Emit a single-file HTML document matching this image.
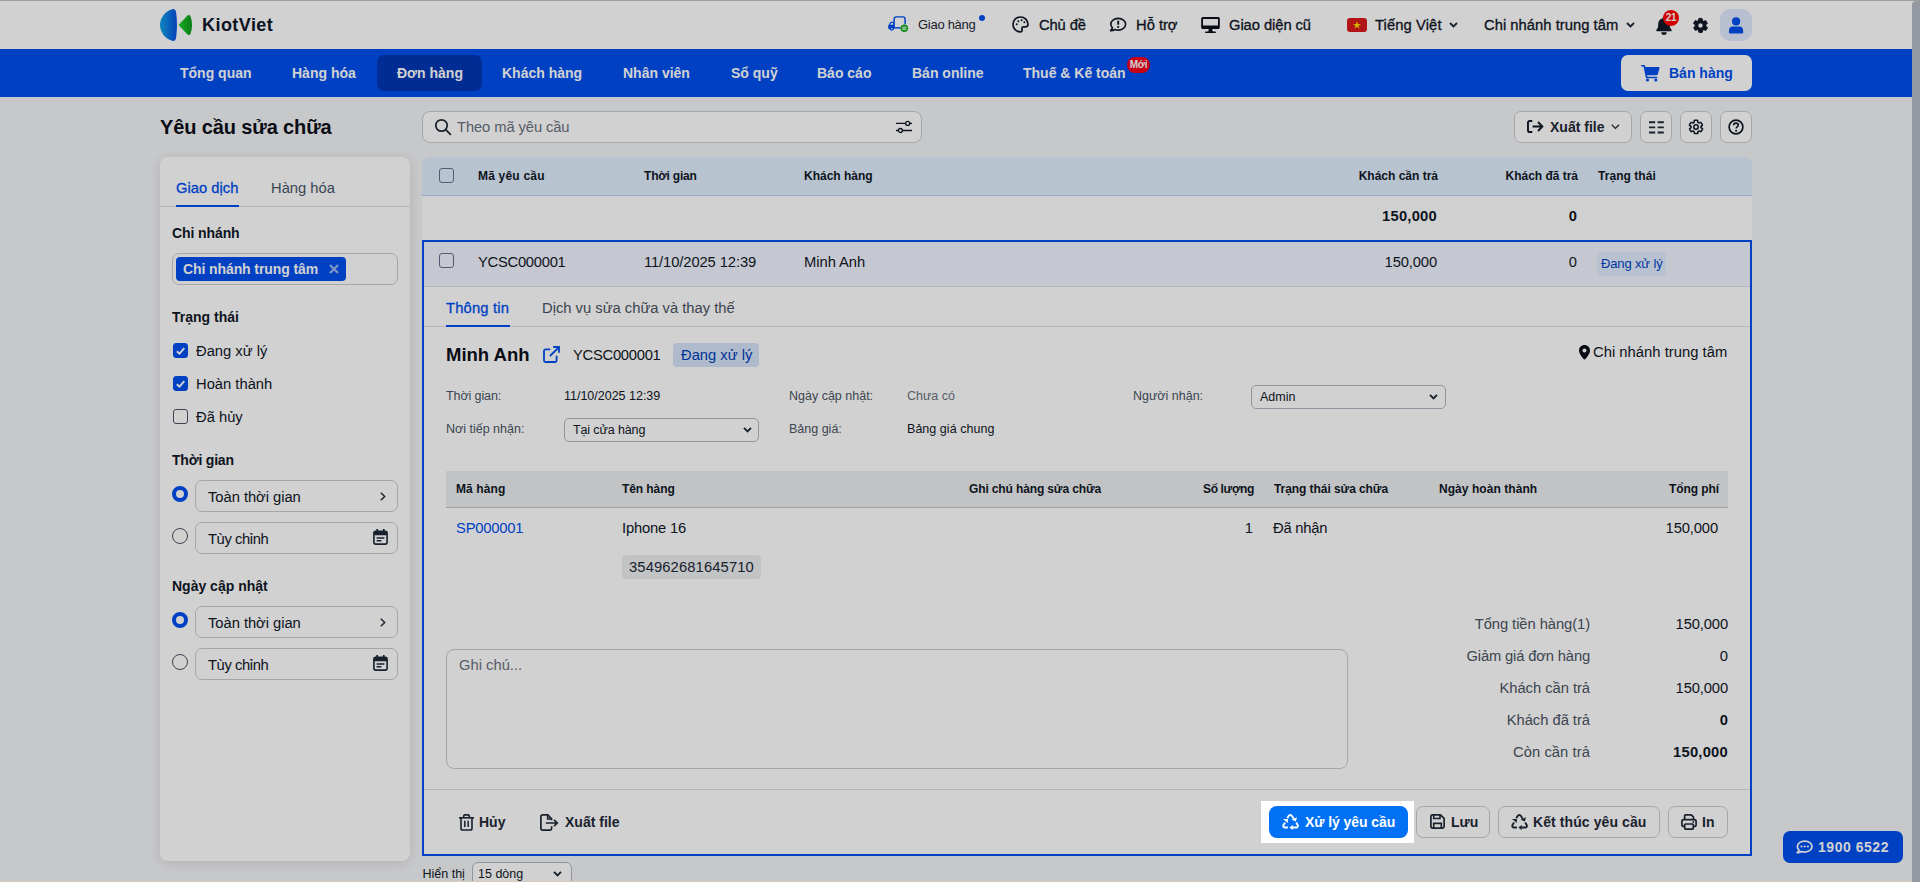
<!DOCTYPE html>
<html lang="vi">
<head>
<meta charset="utf-8">
<title>KiotViet - Yêu cầu sửa chữa</title>
<style>
*{box-sizing:border-box;margin:0;padding:0}
html,body{width:1920px;height:882px;overflow:hidden}
body{font-family:"Liberation Sans",sans-serif;font-size:14.75px;color:#111827;background:#f3f4f6;position:relative}
.abs{position:absolute}
.t{position:absolute;white-space:nowrap;line-height:20px;height:20px}
.b{font-weight:700}
.m{-webkit-text-stroke:.3px currentColor}
.r{text-align:right}
svg{position:absolute;display:block;overflow:visible}
/* top bar */
#topbar{position:absolute;left:0;top:0;width:1920px;height:49px;background:#fff}
#topline{position:absolute;left:0;top:0;width:1920px;height:1px;background:#c0c0c0}
#nav{position:absolute;left:0;top:49px;width:1920px;height:48px;background:#0050f0}
.nv{position:absolute;top:14px;height:20px;line-height:20px;font-size:14px;font-weight:700;color:#fff;white-space:nowrap}
/* sidebar */
#side{position:absolute;left:160px;top:157px;width:250px;height:704px;background:#fff;border-radius:8px;box-shadow:0 2px 12px rgba(0,0,0,.11)}
.cb{position:absolute;width:15px;height:15px;border:1.5px solid #4b5563;border-radius:3px;background:#fff}
.cb.on{background:#0050f0;border-color:#0050f0}
.rd{position:absolute;width:16px;height:16px;border:1.5px solid #4b5563;border-radius:50%;background:#fff}
.rd.on{border:4.5px solid #0050f0}
.box{position:absolute;border:1px solid #c9cdd4;border-radius:7px;background:#fff}
.lbl{color:#4b5563}
/* table */
#thead{position:absolute;left:422px;top:157px;width:1330px;height:39px;background:#e1eefe;border-radius:8px 8px 0 0;border-bottom:1px solid #b5d0f7}
#sumrow{position:absolute;left:422px;top:196px;width:1330px;height:44px;background:#fefefe}
#sel{position:absolute;left:422px;top:240px;width:1330px;height:616px;border:2px solid #0050f0;background:#fff}
.btn{position:absolute;height:32px;border:1px solid #c9cdd4;border-radius:7px;background:#fff}
/* overlay */
#ov{position:absolute;left:0;top:0;width:1920px;height:882px;background:rgba(0,0,0,.18);z-index:50}
#hl{position:absolute;left:1260.700px;top:800.600px;width:153.400px;height:42px;background:#fff;z-index:60}
#hlbtn{position:absolute;left:1269px;top:806px;width:139px;height:32px;background:#0070f4;border-radius:8px;z-index:61}
#scroll{position:absolute;left:1912px;top:1px;width:8px;height:881px;background:#9499a2;border-radius:4px 0 0 0;z-index:70}
</style>
</head>
<body>
<!-- TOP BAR -->
<div id="topbar">
  <div id="topline"></div>
  <!-- logo -->
  <svg style="left:160px;top:9px" width="34" height="32" viewBox="0 0 34 32">
    <defs>
      <linearGradient id="lgb" x1="0" y1="0" x2="1" y2="0"><stop offset="0" stop-color="#12a5e8"/><stop offset="1" stop-color="#0a50e0"/></linearGradient>
      <linearGradient id="lgg" x1="0" y1="0" x2="1" y2="0"><stop offset="0" stop-color="#1fd12a"/><stop offset="1" stop-color="#0a9a1a"/></linearGradient>
    </defs>
    <path d="M13 0 C5 2 0 9 0 16 C0 23 5 30 13 32 C15.5 32 16 30 16.3 27 C17.2 20 17.2 12 16.3 5 C16 2 15.5 0 13 0Z" fill="url(#lgb)"/>
    <path d="M18.5 16 L27.5 6.5 C29 5.5 30 6 30.6 7.5 C32.5 13 32.5 19 30.6 24.5 C30 26 29 26.5 27.5 25.5Z" fill="url(#lgg)"/>
  </svg>
  <div class="t b" style="left:202px;top:15px;font-size:18px;color:#0f172a;letter-spacing:0.45px">KiotViet</div>
  <!-- right menu -->
  <div class="t" style="left:918px;top:14.600px;font-size:13px;color:#1f2937;letter-spacing:-0.28px">Giao hàng</div>
  <div class="abs" style="left:979px;top:15px;width:6px;height:6px;border-radius:50%;background:#0050f0"></div>
  <div class="t m" style="left:1039px;top:15px;letter-spacing:-0.13px">Chủ đề</div>
  <div class="t m" style="left:1136px;top:15px;letter-spacing:-0.02px">Hỗ trợ</div>
  <div class="t m" style="left:1229px;top:15px;letter-spacing:-0.07px">Giao diện cũ</div>
  <div class="abs" style="left:1347px;top:18px;width:20px;height:14px;border-radius:3px;background:#da1a1a"></div>
  <svg style="left:1353px;top:21px" width="8" height="8" viewBox="0 0 10 10"><path d="M5 0l1.2 3.6H10L6.9 5.9 8.1 9.6 5 7.3 1.9 9.6 3.1 5.9 0 3.6h3.8z" fill="#ffde00"/></svg>
  <div class="t m" style="left:1375px;top:15px;letter-spacing:0.10px">Tiếng Việt</div>
  <div class="t m" style="left:1484px;top:15px;letter-spacing:0.03px">Chi nhánh trung tâm</div>
  <div class="abs" style="left:1720px;top:9px;width:32px;height:32px;border-radius:10px;background:#e0eaff"></div>
</div>
<!-- NAV -->
<div id="nav">
  <div class="abs" style="left:377px;top:6px;width:105px;height:36px;border-radius:7px;background:#0036b4"></div>
  <div class="nv" style="left:180px">Tổng quan</div>
  <div class="nv" style="left:292px">Hàng hóa</div>
  <div class="nv" style="left:397px">Đơn hàng</div>
  <div class="nv" style="left:502px">Khách hàng</div>
  <div class="nv" style="left:623px">Nhân viên</div>
  <div class="nv" style="left:731px">Sổ quỹ</div>
  <div class="nv" style="left:817px">Báo cáo</div>
  <div class="nv" style="left:912px">Bán online</div>
  <div class="nv" style="left:1023px">Thuế &amp; Kế toán</div>
  <div class="abs" style="left:1127px;top:8px;width:23px;height:16px;border-radius:8px;background:#f5001c;color:#fff;font-size:10px;font-weight:700;line-height:15px;text-align:center;letter-spacing:-.3px">Mới</div>
  <div class="abs" style="left:1621px;top:6px;width:131px;height:36px;border-radius:7px;background:#fff"></div>
  <div class="nv" style="left:1669px;color:#0050f0">Bán hàng</div>
</div>
<!-- PAGE HEAD -->
<div class="t b" style="left:160px;top:115px;font-size:20px;line-height:24px;height:24px;color:#0b0f19;letter-spacing:-0.12px">Yêu cầu sửa chữa</div>
<div class="box" style="left:422px;top:111px;width:500px;height:32px;border-radius:8px"></div>
<div class="t" style="left:457px;top:117px;color:#6b7280;letter-spacing:-0.10px">Theo mã yêu cầu</div>
<div class="btn" style="left:1514px;top:111px;width:118px"></div>
<div class="t b" style="left:1550px;top:117px;font-size:14px;color:#1f2937">Xuất file</div>
<div class="btn" style="left:1640px;top:111px;width:32px"></div>
<div class="btn" style="left:1680px;top:111px;width:32px"></div>
<div class="btn" style="left:1720px;top:111px;width:32px"></div>
<!-- SIDEBAR -->
<div id="side"></div>
<div class="abs" style="left:160px;top:206px;width:250px;height:1px;background:#dcdfe4"></div>
<div class="abs" style="left:176px;top:205px;width:63px;height:2px;background:#0050f0"></div>
<div class="t m" style="left:176px;top:178px;color:#0050f0;letter-spacing:0.01px">Giao dịch</div>
<div class="t" style="left:271px;top:178px;color:#475569;letter-spacing:0.00px">Hàng hóa</div>
<div class="t b" style="left:172px;top:223px;font-size:14px;letter-spacing:-0.10px">Chi nhánh</div>
<div class="box" style="left:172px;top:253px;width:226px;height:32px"></div>
<div class="abs" style="left:176px;top:257px;width:170px;height:24px;border-radius:4px;background:#0050f0"></div>
<div class="t b" style="left:183px;top:259px;font-size:14px;color:#fff;letter-spacing:-0.10px">Chi nhánh trung tâm</div>
<div class="t b" style="left:172px;top:307px;font-size:14px;letter-spacing:0.01px">Trạng thái</div>
<div class="cb on" style="left:173px;top:343px"></div>
<div class="t" style="left:196px;top:341px">Đang xử lý</div>
<div class="cb on" style="left:173px;top:376px"></div>
<div class="t" style="left:196px;top:374px;letter-spacing:-0.00px">Hoàn thành</div>
<div class="cb" style="left:173px;top:409px"></div>
<div class="t" style="left:196px;top:407px">Đã hủy</div>
<div class="t b" style="left:172px;top:450px;font-size:14px;letter-spacing:-0.21px">Thời gian</div>
<div class="rd on" style="left:172px;top:486px"></div>
<div class="box" style="left:195px;top:480px;width:203px;height:32px"></div>
<div class="t" style="left:208px;top:487px;letter-spacing:-0.04px">Toàn thời gian</div>
<div class="rd" style="left:172px;top:528px"></div>
<div class="box" style="left:195px;top:522px;width:203px;height:32px"></div>
<div class="t" style="left:208px;top:529px;letter-spacing:-0.41px">Tùy chỉnh</div>
<div class="t b" style="left:172px;top:576px;font-size:14px">Ngày cập nhật</div>
<div class="rd on" style="left:172px;top:612px"></div>
<div class="box" style="left:195px;top:606px;width:203px;height:32px"></div>
<div class="t" style="left:208px;top:613px;letter-spacing:-0.04px">Toàn thời gian</div>
<div class="rd" style="left:172px;top:654px"></div>
<div class="box" style="left:195px;top:648px;width:203px;height:32px"></div>
<div class="t" style="left:208px;top:655px;letter-spacing:-0.41px">Tùy chỉnh</div>
<!-- TABLE -->
<div id="thead"></div>
<div class="cb" style="left:438.700px;top:168.400px;border-color:#64708a;background:transparent"></div>
<div class="t b" style="left:478px;top:166px;font-size:12px;letter-spacing:0.20px">Mã yêu cầu</div>
<div class="t b" style="left:644px;top:166px;font-size:12px;letter-spacing:-0.20px">Thời gian</div>
<div class="t b" style="left:804px;top:166px;font-size:12px;letter-spacing:0.00px">Khách hàng</div>
<div class="t b r" style="left:1237px;width:201px;top:166px;font-size:12px;letter-spacing:-0.00px">Khách cần trả</div>
<div class="t b r" style="left:1377px;width:201px;top:166px;font-size:12px;letter-spacing:-0.02px">Khách đã trả</div>
<div class="t b" style="left:1598px;top:166px;font-size:12px;letter-spacing:0.05px">Trạng thái</div>
<div id="sumrow"></div>
<div class="t b r" style="left:1237px;width:200px;top:206px;letter-spacing:0.24px">150,000</div>
<div class="t b r" style="left:1377px;width:200px;top:206px">0</div>
<!-- SELECTED -->
<div id="sel"></div>
<div class="abs" style="left:424px;top:242px;width:1326px;height:44px;background:#f1f5ff"></div>
<div class="abs" style="left:424px;top:286px;width:1326px;height:1px;background:#dcdfe4"></div>
<div class="cb" style="left:438.800px;top:253px;border-color:#64708a;background:transparent"></div>
<div class="t" style="left:478px;top:252px;letter-spacing:-0.27px">YCSC000001</div>
<div class="t" style="left:644px;top:252px;letter-spacing:-0.10px">11/10/2025 12:39</div>
<div class="t" style="left:804px;top:252px;letter-spacing:-0.04px">Minh Anh</div>
<div class="t r" style="left:1237px;width:200px;top:252px;letter-spacing:-0.13px">150,000</div>
<div class="t r" style="left:1377px;width:200px;top:252px">0</div>
<div class="abs" style="left:1597px;top:252px;width:69px;height:24px;border-radius:4px;background:#e1ecfd"></div>
<div class="t" style="left:1601px;top:254px;font-size:13px;color:#0044c8;letter-spacing:-0.14px">Đang xử lý</div>
<!-- detail tabs -->
<div class="t m" style="left:446px;top:298px;color:#0050f0;letter-spacing:0.17px">Thông tin</div>
<div class="t" style="left:542px;top:298px;color:#4b5563;letter-spacing:0.00px">Dịch vụ sửa chữa và thay thế</div>
<div class="abs" style="left:424px;top:326px;width:1326px;height:1px;background:#dcdfe4"></div>
<div class="abs" style="left:446px;top:325px;width:64px;height:2px;background:#0050f0"></div>
<!-- detail head -->
<div class="t b" style="left:446px;top:344px;font-size:18.5px;line-height:22px;height:22px;color:#0b0f19">Minh Anh</div>
<div class="t" style="left:573px;top:345px;letter-spacing:-0.27px">YCSC000001</div>
<div class="abs" style="left:673px;top:343px;width:86px;height:24px;border-radius:4px;background:#d6e4fb"></div>
<div class="t" style="left:681px;top:345px;color:#0040b8">Đang xử lý</div>
<div class="t" style="left:1593px;top:342px;letter-spacing:0.03px">Chi nhánh trung tâm</div>
<!-- fields -->
<div class="t lbl" style="left:446px;top:386px;font-size:12.5px;letter-spacing:-0.10px">Thời gian:</div>
<div class="t" style="left:564px;top:386px;font-size:12.5px;letter-spacing:-0.01px">11/10/2025 12:39</div>
<div class="t lbl" style="left:789px;top:386px;font-size:12.5px">Ngày cập nhật:</div>
<div class="t" style="left:907px;top:386px;font-size:12.5px;color:#6b7280">Chưa có</div>
<div class="t lbl" style="left:1133px;top:386px;font-size:12.5px">Người nhận:</div>
<div class="box" style="left:1251px;top:385px;width:195px;height:24px;border-radius:5px;border-color:#b0b6c2"></div>
<div class="t" style="left:1260px;top:387px;font-size:12.5px">Admin</div>
<div class="t lbl" style="left:446px;top:419px;font-size:12.5px">Nơi tiếp nhận:</div>
<div class="box" style="left:564px;top:418px;width:195px;height:24px;border-radius:5px;border-color:#b0b6c2"></div>
<div class="t" style="left:573px;top:420px;font-size:12.5px;letter-spacing:-0.12px">Tại cửa hàng</div>
<div class="t lbl" style="left:789px;top:419px;font-size:12.5px">Bảng giá:</div>
<div class="t" style="left:907px;top:419px;font-size:12.5px;letter-spacing:0.04px">Bảng giá chung</div>
<!-- inner table -->
<div class="abs" style="left:446px;top:471px;width:1282px;height:37px;background:#eceef1;border-bottom:1px solid #c3c7ce"></div>
<div class="t b" style="left:456px;top:479px;font-size:12px;letter-spacing:0.09px">Mã hàng</div>
<div class="t b" style="left:622px;top:479px;font-size:12px;letter-spacing:-0.08px">Tên hàng</div>
<div class="t b" style="left:969px;top:479px;font-size:12px;letter-spacing:-0.13px">Ghi chú hàng sửa chữa</div>
<div class="t b r" style="left:1054px;width:200px;top:479px;font-size:12px;letter-spacing:-0.36px">Số lượng</div>
<div class="t b" style="left:1274px;top:479px;font-size:12px;letter-spacing:-0.07px">Trạng thái sửa chữa</div>
<div class="t b" style="left:1439px;top:479px;font-size:12px;letter-spacing:0.06px">Ngày hoàn thành</div>
<div class="t b r" style="left:1519px;width:200px;top:479px;font-size:12px;letter-spacing:-0.08px">Tổng phí</div>
<div class="t" style="left:456px;top:518px;color:#0050f0;letter-spacing:-0.20px">SP000001</div>
<div class="t" style="left:622px;top:518px;letter-spacing:-0.18px">Iphone 16</div>
<div class="t r" style="left:1053px;width:200px;top:518px">1</div>
<div class="t" style="left:1273px;top:518px;letter-spacing:-0.20px">Đã nhận</div>
<div class="t r" style="left:1518px;width:200px;top:518px;letter-spacing:-0.13px">150,000</div>
<div class="abs" style="left:622px;top:555px;width:139px;height:24px;border-radius:4px;background:#eceef1"></div>
<div class="t" style="left:629px;top:557px;color:#1f2937;letter-spacing:0.12px">354962681645710</div>
<!-- textarea -->
<div class="box" style="left:446px;top:649px;width:902px;height:120px;border-radius:8px"></div>
<div class="t" style="left:459px;top:655px;color:#6b7280">Ghi chú...</div>
<!-- totals -->
<div class="t r lbl" style="left:1390px;width:200px;top:614px;letter-spacing:-0.07px">Tổng tiền hàng(1)</div>
<div class="t r" style="left:1528px;width:200px;top:614px;letter-spacing:-0.13px">150,000</div>
<div class="t r lbl" style="left:1390px;width:200px;top:646px;letter-spacing:-0.15px">Giảm giá đơn hàng</div>
<div class="t r" style="left:1528px;width:200px;top:646px">0</div>
<div class="t r lbl" style="left:1390px;width:200px;top:678px;letter-spacing:-0.04px">Khách cần trả</div>
<div class="t r" style="left:1528px;width:200px;top:678px;letter-spacing:-0.13px">150,000</div>
<div class="t r lbl" style="left:1390px;width:200px;top:710px;letter-spacing:-0.03px">Khách đã trả</div>
<div class="t r b" style="left:1528px;width:200px;top:710px">0</div>
<div class="t r lbl" style="left:1390px;width:200px;top:742px;letter-spacing:0.07px">Còn cần trả</div>
<div class="t r b" style="left:1528px;width:200px;top:742px;letter-spacing:0.24px">150,000</div>
<!-- footer -->
<div class="abs" style="left:424px;top:789px;width:1326px;height:1px;background:#dcdfe4"></div>
<div class="t b" style="left:479px;top:812px;font-size:14px;color:#1f2937">Hủy</div>
<div class="t b" style="left:565px;top:812px;font-size:14px;color:#1f2937">Xuất file</div>
<div class="btn" style="left:1416px;top:806px;width:74px"></div>
<div class="t b" style="left:1451px;top:812px;font-size:14px;color:#1f2937">Lưu</div>
<div class="btn" style="left:1498px;top:806px;width:162px"></div>
<div class="t b" style="left:1533px;top:812px;font-size:14px;color:#1f2937;letter-spacing:0.09px">Kết thúc yêu cầu</div>
<div class="btn" style="left:1668px;top:806px;width:60px"></div>
<div class="t b" style="left:1702px;top:812px;font-size:14px;color:#1f2937">In</div>
<!-- pager -->
<div class="t" style="left:422.500px;top:864px;font-size:12.5px">Hiển thị</div>
<div class="box" style="left:472px;top:862px;width:100px;height:26px;border-radius:6px;border-color:#b0b6c2"></div>
<div class="t" style="left:478px;top:864px;font-size:12.5px">15 dòng</div>
<!-- hotline -->
<div class="abs" style="left:1783px;top:831px;width:120px;height:32px;border-radius:7px;background:#0050f0"></div>
<div class="t b" style="left:1818px;top:837px;font-size:14px;color:#fff;letter-spacing:0.53px">1900 6522</div>
<!-- ICONS TOP -->
<svg style="left:888.300px;top:16.200px" width="20.300" height="16.400" viewBox="0 0 21 17" fill="none">
  <path d="M6.3 12.2V3.3a2.4 2.4 0 0 1 2.4-2.4h6.6a2.4 2.4 0 0 1 2.4 2.4v5.2" stroke="#0050f0" stroke-width="1.5"/>
  <path d="M5.6 12.3h7.6" stroke="#0050f0" stroke-width="1.5"/>
  <path d="M6.3 6H3.4c-.5 0-.9.3-1.2.7L.5 9.4c-.2.3-.3.6-.3 1v2.4c0 .6.4 1 1 1h5.1z" fill="#0050f0"/>
  <path d="M2.2 9.2l1.3-2h1.7v2z" fill="#fff"/>
  <circle cx="3.9" cy="13.2" r="2.1" fill="#0050f0"/><circle cx="3.9" cy="13.2" r=".8" fill="#fff"/>
  <circle cx="16.9" cy="12.6" r="3.9" fill="#12b020"/>
  <path d="M14.8 11.7h4.2M14.8 13.6h4.2" stroke="#fff" stroke-width="1.1"/>
</svg>
<svg style="left:1012.100px;top:16px" width="17" height="17" viewBox="0 0 17 17" fill="none">
  <path d="M8.5 1C4.3 1 1 4.3 1 8.4c0 4 3.2 7.4 7.3 7.5 1.4 0 2.2-1.3 1.7-2.5-.5-1.3.3-2.6 1.7-2.6h2.1c1.2 0 2.2-.9 2.2-2.2C16 4.200 12.600 1 8.500 1z" stroke="#111827" stroke-width="1.7"/>
  <circle cx="4.700" cy="8.300" r="1" fill="#111827"/><circle cx="6.300" cy="5.200" r="1" fill="#111827"/><circle cx="9.600" cy="4.300" r="1" fill="#111827"/><circle cx="12.400" cy="6.200" r="1" fill="#111827"/>
</svg>
<svg style="left:1109px;top:17px" width="18" height="16" viewBox="0 0 18 16" fill="none">
  <path d="M9.200 1.400c-4.100 0-7.400 2.600-7.400 5.800 0 1.400.6 2.600 1.600 3.600-.3 1.100-1 2.100-1.900 3 1.600.100 3.200-.4 4.400-1.300 1 .4 2.100.6 3.300.6 4.100 0 7.400-2.600 7.400-5.900 0-3.200-3.300-5.800-7.400-5.800z" stroke="#111827" stroke-width="1.6" stroke-linejoin="round"/>
  <path d="M9.200 3.700v4" stroke="#111827" stroke-width="1.900"/><circle cx="9.200" cy="10" r="1.100" fill="#111827"/>
</svg>
<svg style="left:1201px;top:17px" width="19" height="16" viewBox="0 0 19 16">
  <path d="M1.800 0h15.400A1.600 1.600 0 0 1 18.800 1.600v8.800a1.600 1.600 0 0 1-1.600 1.600H1.800A1.600 1.600 0 0 1 .2 10.400V1.600A1.600 1.600 0 0 1 1.800 0zM2 1.900v6.700h15V1.900z" fill="#0b0f19" fill-rule="evenodd"/>
  <path d="M7.800 12h3.400l.5 2.600h2.500c.5 0 .8.300.8.700s-.3.700-.8.700H4.800c-.5 0-.8-.3-.8-.7s.3-.7.800-.7h2.500z" fill="#0b0f19"/>
</svg>
<svg style="left:1449px;top:22px" width="9" height="6" viewBox="0 0 9 6" fill="none"><path d="M1 1l3.500 3.500L8 1" stroke="#1f2937" stroke-width="1.800"/></svg>
<svg style="left:1625.500px;top:22px" width="9" height="6" viewBox="0 0 9 6" fill="none"><path d="M1 1l3.500 3.500L8 1" stroke="#1f2937" stroke-width="1.800"/></svg>
<svg style="left:1655px;top:16px" width="18" height="20" viewBox="0 0 18 20">
  <path d="M9 .5c.7 0 1.200.5 1.200 1.200v.5c2.800.6 4.600 3 4.600 5.900v1.500c0 1.500.6 3 1.700 4.100.6.600.2 1.500-.6 1.500H2.100c-.8 0-1.200-.9-.6-1.500 1.100-1.100 1.700-2.600 1.700-4.100V8.100c0-2.900 1.800-5.300 4.600-5.900v-.5C7.800 1 8.300.5 9 .5z" fill="#111827"/>
  <path d="M6.300 16.300h5.400a2.700 2.700 0 0 1-5.400 0z" fill="#111827"/>
</svg>
<div class="abs" style="left:1663px;top:10px;width:16px;height:16px;border-radius:50%;background:#ff0000;color:#fff;font-size:10px;font-weight:700;line-height:16px;text-align:center;letter-spacing:-.2px">21</div>
<svg style="left:1691.500px;top:16.500px" width="17" height="17" viewBox="0 0 24 24">
  <path d="M19.400 13c0-.3.100-.6.100-1s0-.7-.1-1l2.100-1.600c.2-.2.200-.4.100-.6l-2-3.500c-.1-.2-.4-.3-.6-.2l-2.500 1c-.5-.4-1.100-.7-1.700-1l-.4-2.600c0-.3-.2-.5-.5-.5h-4c-.2 0-.5.200-.5.400l-.4 2.700c-.6.200-1.100.6-1.700 1l-2.500-1c-.2-.1-.5 0-.6.200l-2 3.500c-.1.200-.1.500.1.600L4.600 11c0 .3-.1.600-.1 1s0 .7.100 1l-2.100 1.600c-.2.200-.2.400-.1.600l2 3.500c.1.200.4.300.6.200l2.500-1c.5.400 1.100.7 1.700 1l.4 2.600c0 .2.200.4.500.4h4c.2 0 .5-.2.500-.4l.4-2.600c.6-.2 1.100-.6 1.700-1l2.500 1c.2.100.5 0 .6-.2l2-3.500c.1-.2.100-.5-.1-.6zM12 15.600c-2 0-3.600-1.600-3.600-3.600S10 8.400 12 8.400s3.600 1.600 3.600 3.600-1.600 3.600-3.600 3.600z" fill="#111827" stroke="#111827" stroke-width="1.200"/>
</svg>
<svg style="left:1729px;top:16.500px" width="14" height="17" viewBox="0 0 14 17">
  <circle cx="7.100" cy="4.400" r="4.100" fill="#0050f0"/>
  <path d="M3.600 9.500h6.900c2 0 3.600 1.600 3.600 3.600v2.400c0 .6-.4 1-1 1H1c-.6 0-1-.4-1-1v-2.400c0-2 1.600-3.600 3.600-3.600z" fill="#0050f0"/>
</svg>
<!-- ICONS NAV/TOOLBAR -->
<svg style="left:1640.500px;top:64.500px" width="19" height="17" viewBox="0 0 19 17">
  <path d="M.8 0h2.300c.5 0 .9.300 1 .8l.2 1.100h13.400c.6 0 1 .6.800 1.100l-1.700 6.200c-.2.600-.7 1-1.300 1H6l.3 1.500h9.300c.5 0 .8.400.8.800s-.3.800-.8.800H5.600c-.4 0-.7-.3-.8-.7L2.500 1.600H.8C.3 1.600 0 1.300 0 .8S.3 0 .8 0z" fill="#0050f0"/>
  <circle cx="6.500" cy="15" r="1.600" fill="#0050f0"/><circle cx="14.800" cy="15" r="1.600" fill="#0050f0"/>
</svg>
<svg style="left:434px;top:118px" width="18" height="18" viewBox="0 0 18 18" fill="none">
  <circle cx="7.500" cy="7.500" r="5.700" stroke="#1f2937" stroke-width="1.700"/><path d="M11.700 11.700l4.700 4.600" stroke="#1f2937" stroke-width="1.800" stroke-linecap="round"/>
</svg>
<svg style="left:896px;top:120px" width="16" height="14" viewBox="0 0 16 14" fill="none">
  <path d="M0 3.400h16M0 10.500h16" stroke="#111827" stroke-width="1.300"/>
  <circle cx="11.700" cy="3.400" r="2" fill="#fff" stroke="#111827" stroke-width="1.300"/><circle cx="4.400" cy="10.500" r="2" fill="#fff" stroke="#111827" stroke-width="1.300"/>
</svg>
<svg style="left:1527px;top:120px" width="17" height="13" viewBox="0 0 17 13" fill="none">
  <path d="M5.300 1H2.600C1.700 1 1 1.700 1 2.600v7.800c0 .9.700 1.600 1.600 1.600h2.700" stroke="#111827" stroke-width="1.900"/>
  <path d="M5.600 6.500h9.600M11 2l4.400 4.500L11 11" stroke="#111827" stroke-width="1.900"/>
</svg>
<svg style="left:1611px;top:124px" width="9" height="6" viewBox="0 0 9 6" fill="none"><path d="M.8.800l3.600 3.600L8 .8" stroke="#1f2937" stroke-width="1.300"/></svg>
<svg style="left:1648.500px;top:120.500px" width="15" height="13" viewBox="0 0 15 13" fill="none">
  <path d="M0 1.300h6.200M8.600 1.300h6.200M0 6.400h6.200M8.600 6.400h6.200M0 11.500h6.200M8.600 11.500h6.200" stroke="#1f2937" stroke-width="1.900"/>
</svg>
<svg style="left:1688px;top:119px" width="16" height="16" viewBox="0 0 24 24" fill="none">
  <path d="M19.400 13c0-.3.100-.6.100-1s0-.7-.1-1l2.100-1.600c.2-.2.200-.4.100-.6l-2-3.500c-.1-.2-.4-.3-.6-.2l-2.500 1c-.5-.4-1.100-.7-1.700-1l-.4-2.600c0-.3-.2-.5-.5-.5h-4c-.2 0-.5.200-.5.400l-.4 2.700c-.6.200-1.100.6-1.700 1l-2.500-1c-.2-.1-.5 0-.6.200l-2 3.500c-.1.200-.1.500.1.600L4.600 11c0 .3-.1.600-.1 1s0 .7.100 1l-2.100 1.600c-.2.200-.2.400-.1.600l2 3.500c.1.200.4.300.6.200l2.500-1c.5.400 1.100.7 1.700 1l.4 2.600c0 .2.200.4.500.4h4c.2 0 .5-.2.500-.4l.4-2.600c.6-.2 1.100-.6 1.700-1l2.500 1c.2.100.5 0 .6-.2l2-3.500c.1-.2.100-.5-.1-.6z" stroke="#111827" stroke-width="2.300" stroke-linejoin="round"/>
  <circle cx="12" cy="12" r="3.300" stroke="#111827" stroke-width="2.300"/>
</svg>
<svg style="left:1728px;top:119px" width="16" height="16" viewBox="0 0 16 16" fill="none">
  <circle cx="8" cy="8" r="6.900" stroke="#111827" stroke-width="1.700"/>
  <path d="M5.700 6.300c0-1.300 1-2.200 2.300-2.200s2.300.8 2.300 2c0 1.700-2.200 1.700-2.200 3.400" stroke="#111827" stroke-width="1.700"/><circle cx="8.100" cy="11.800" r="1.050" fill="#111827"/>
</svg>
<!-- ICONS SIDEBAR -->
<svg style="left:328.500px;top:264px" width="10" height="10" viewBox="0 0 10 10" fill="none"><path d="M1 1l8 8M9 1l-8 8" stroke="#9db8f5" stroke-width="2.200"/></svg>
<svg style="left:176px;top:346.500px" width="9" height="8" viewBox="0 0 9 8" fill="none"><path d="M.8 4.200l2.700 2.500L8.300 1.200" stroke="#fff" stroke-width="1.900"/></svg>
<svg style="left:176px;top:379.500px" width="9" height="8" viewBox="0 0 9 8" fill="none"><path d="M.8 4.200l2.700 2.500L8.300 1.200" stroke="#fff" stroke-width="1.900"/></svg>
<svg style="left:380px;top:492px" width="6" height="9" viewBox="0 0 6 9" fill="none"><path d="M.8.800L4.700 4.500.8 8.200" stroke="#1f2937" stroke-width="1.400"/></svg>
<svg style="left:380px;top:618px" width="6" height="9" viewBox="0 0 6 9" fill="none"><path d="M.8.800L4.700 4.500.8 8.200" stroke="#1f2937" stroke-width="1.400"/></svg>
<svg id="cal1" style="left:373px;top:529px" width="15" height="16" viewBox="0 0 15 16" fill="none">
  <rect x=".9" y="2.400" width="13.200" height="12.700" rx="1.800" stroke="#1f2937" stroke-width="1.600"/>
  <path d="M.9 4.200c0-1 .8-1.800 1.800-1.800h9.600c1 0 1.800.8 1.800 1.800v2H.9z" fill="#1f2937"/>
  <path d="M4.200 0v3M10.800 0v3" stroke="#1f2937" stroke-width="1.700"/>
  <path d="M3.600 9h7.800M3.600 11.800h4.800" stroke="#1f2937" stroke-width="1.400"/>
</svg>
<svg id="cal2" style="left:373px;top:655px" width="15" height="16" viewBox="0 0 15 16" fill="none">
  <rect x=".9" y="2.400" width="13.200" height="12.700" rx="1.800" stroke="#1f2937" stroke-width="1.600"/>
  <path d="M.9 4.200c0-1 .8-1.800 1.800-1.800h9.600c1 0 1.800.8 1.800 1.800v2H.9z" fill="#1f2937"/>
  <path d="M4.200 0v3M10.800 0v3" stroke="#1f2937" stroke-width="1.700"/>
  <path d="M3.600 9h7.800M3.600 11.800h4.800" stroke="#1f2937" stroke-width="1.400"/>
</svg>
<!-- ICONS DETAIL -->
<svg style="left:542.500px;top:345.500px" width="17" height="17" viewBox="0 0 17 17" fill="none">
  <path d="M7.300 3.400H2.500c-.8 0-1.500.7-1.500 1.500v9.600c0 .8.700 1.500 1.500 1.500h9.600c.8 0 1.500-.7 1.500-1.500V9.700" stroke="#0050f0" stroke-width="1.800"/>
  <path d="M10.200 1h5.800v5.800M15.700 1.300L7 10" stroke="#0050f0" stroke-width="1.800"/>
</svg>
<svg style="left:1578.500px;top:344.800px" width="11" height="15" viewBox="0 0 11 15">
  <path d="M5.500 0C2.500 0 0 2.400 0 5.400c0 3.600 4.300 8.200 5 8.900.3.300.7.300 1 0 .7-.7 5-5.300 5-8.900C11 2.400 8.500 0 5.500 0zm0 7.400a2 2 0 1 1 0-4 2 2 0 0 1 0 4z" fill="#0b0f19"/>
</svg>
<svg style="left:1428.500px;top:393.500px" width="9" height="6" viewBox="0 0 9 6" fill="none"><path d="M1 .9l3.500 3.500L8 .9" stroke="#1f2937" stroke-width="1.900"/></svg>
<svg style="left:742.500px;top:426.500px" width="9" height="6" viewBox="0 0 9 6" fill="none"><path d="M1 .9l3.500 3.500L8 .9" stroke="#1f2937" stroke-width="1.900"/></svg>
<svg style="left:553px;top:870.500px" width="9" height="6" viewBox="0 0 9 6" fill="none"><path d="M1 .9l3.500 3.500L8 .9" stroke="#1f2937" stroke-width="1.900"/></svg>
<!-- ICONS FOOTER -->
<svg style="left:458.500px;top:813.500px" width="15" height="17" viewBox="0 0 15 17" fill="none">
  <path d="M0 3.800h15" stroke="#1f2937" stroke-width="1.600"/>
  <path d="M4.700 3.600V2c0-.6.500-1.100 1.100-1.100h3.400c.6 0 1.100.5 1.100 1.100v1.600" stroke="#1f2937" stroke-width="1.600"/>
  <path d="M2 4v10.200c0 1 .8 1.800 1.800 1.800h7.400c1 0 1.800-.8 1.800-1.800V4" stroke="#1f2937" stroke-width="1.600"/>
  <path d="M5.800 6.800v6.300M9.200 6.800v6.300" stroke="#1f2937" stroke-width="1.500"/>
</svg>
<svg style="left:540px;top:813.500px" width="19" height="17" viewBox="0 0 19 17" fill="none">
  <path d="M11.600 12.300v2.200c0 .9-.7 1.600-1.600 1.600H2.500c-.9 0-1.600-.7-1.600-1.600v-12c0-.9.700-1.600 1.600-1.600h5.300l3.800 3.900v1.500" stroke="#1f2937" stroke-width="1.700" stroke-linejoin="round"/>
  <path d="M7.600 1.200v3.800h3.800" stroke="#1f2937" stroke-width="1.500"/>
  <path d="M5.800 9h11M14 5.800L17.300 9 14 12.200" stroke="#1f2937" stroke-width="1.700"/>
</svg>
<svg style="left:1430px;top:814px" width="15" height="15" viewBox="0 0 15 15" fill="none">
  <path d="M2.500.9h8l3.600 3.500v8.100c0 .9-.7 1.600-1.600 1.600h-10c-.9 0-1.600-.7-1.600-1.600v-10c0-.9.700-1.600 1.600-1.600z" stroke="#1f2937" stroke-width="1.700" stroke-linejoin="round"/>
  <path d="M3.700 1v3.500h6.300V1" stroke="#1f2937" stroke-width="1.600"/>
  <path d="M3.700 14V9.400h7.600V14" stroke="#1f2937" stroke-width="1.600"/>
</svg>
<svg style="left:1680.500px;top:814px" width="16" height="16" viewBox="0 0 16 16" fill="none">
  <path d="M3.600 5.600V2c0-.6.500-1.100 1.100-1.100h5.600l2.100 2v2.700" stroke="#1f2937" stroke-width="1.700" stroke-linejoin="round"/>
  <path d="M3.500 12.300H2.300c-.8 0-1.400-.6-1.400-1.400V7.400c0-1 .8-1.800 1.800-1.800h10.600c1 0 1.800.8 1.800 1.800v3.500c0 .8-.6 1.400-1.400 1.400h-1.200" stroke="#1f2937" stroke-width="1.700"/>
  <rect x="3.700" y="10" width="8.600" height="5.100" rx=".8" stroke="#1f2937" stroke-width="1.700"/>
  <circle cx="12.300" cy="8" r=".9" fill="#1f2937"/>
</svg>
<svg id="rc1" style="left:1510.700px;top:813.700px" width="17.200" height="16" viewBox="0 0 17.200 16" fill="none">
  <path d="M5.300 4.300L6.500 2.100C7.300.700 9.300.700 10.100 2.100L11.700 4.800" stroke="#1f2937" stroke-width="1.900"/>
  <path d="M9.600 5.700L14.900 3.300 14 7.400z" fill="#1f2937"/>
  <path d="M14.200 8.600L15.700 11.100C16.400 12.300 15.600 13.500 14.200 13.500H10.600" stroke="#1f2937" stroke-width="1.900"/>
  <path d="M7.300 13.500L10.800 11.100V15.900z" fill="#1f2937"/>
  <path d="M5.900 13.500H3C1.600 13.500.800 12.200 1.500 11L3.100 8.400" stroke="#1f2937" stroke-width="1.900"/>
  <path d="M1 5.100H5.900V9.100z" fill="#1f2937"/>
</svg>
<!-- hotline icon -->
<svg style="left:1796px;top:840px" width="17" height="15" viewBox="0 0 17 15" fill="none">
  <path d="M8.700 1C4.600 1 1.400 3.400 1.400 6.500c0 1.300.600 2.500 1.600 3.400-.300 1.100-.900 2-1.800 2.800 1.500.100 3-.300 4.200-1.200 1 .300 2.100.500 3.300.500 4.100 0 7.300-2.400 7.300-5.500S12.800 1 8.700 1z" stroke="#fff" stroke-width="1.750" stroke-linejoin="round"/>
  <circle cx="5.500" cy="6.500" r="1.100" fill="#fff"/><circle cx="8.700" cy="6.500" r="1.100" fill="#fff"/><circle cx="11.900" cy="6.500" r="1.100" fill="#fff"/>
</svg>
<!--MAINEND-->
<!--OVERLAY-->
<div id="ov"></div>
<div id="hl"></div>
<div id="hlbtn">
<svg style="left:12.900px;top:7.900px" width="17.200" height="16" viewBox="0 0 17.200 16" fill="none">
  <path d="M5.300 4.300L6.500 2.100C7.300.700 9.300.700 10.100 2.100L11.700 4.800" stroke="#fff" stroke-width="1.900"/>
  <path d="M9.600 5.700L14.900 3.300 14 7.400z" fill="#fff"/>
  <path d="M14.200 8.600L15.700 11.100C16.400 12.300 15.600 13.500 14.200 13.500H10.600" stroke="#fff" stroke-width="1.900"/>
  <path d="M7.300 13.500L10.800 11.100V15.900z" fill="#fff"/>
  <path d="M5.900 13.500H3C1.600 13.500.800 12.200 1.500 11L3.100 8.400" stroke="#fff" stroke-width="1.900"/>
  <path d="M1 5.100H5.900V9.100z" fill="#fff"/>
</svg>
<div class="t b" style="left:36px;top:6px;font-size:14px;color:#fff;letter-spacing:-0.06px">Xử lý yêu cầu</div>
</div>
<div class="abs" style="left:0;top:881px;width:1912px;height:1px;background:#d6c9b6;z-index:65"></div>
<div id="scroll"></div>
</body>
</html>
